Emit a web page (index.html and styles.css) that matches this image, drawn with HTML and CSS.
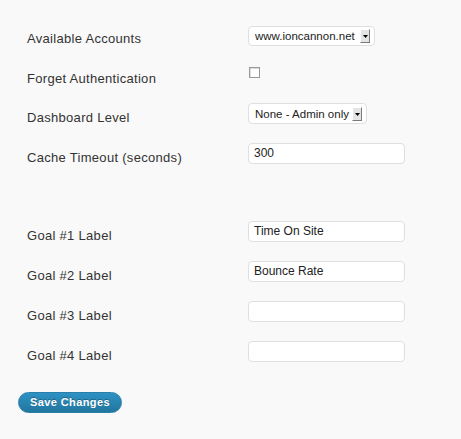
FILE: index.html
```html
<!DOCTYPE html>
<html>
<head>
<meta charset="utf-8">
<link rel="stylesheet" href="styles.css">
</head>
<body>
<form class="settings">
  <div class="row row-first">
    <div class="label">Available Accounts</div>
    <div class="control ctl-sel1">
      <div class="select select-accounts"><span class="select-value">www.ioncannon.net</span><span class="select-arrow"><svg width="5" height="3" viewBox="0 0 5 3"><path d="M0 0H5L2.5 3Z" fill="#000"/></svg></span></div>
    </div>
  </div>
  <div class="row row-check">
    <div class="label">Forget Authentication</div>
    <div class="control ctl-check"><span class="checkbox"></span></div>
  </div>
  <div class="row">
    <div class="label">Dashboard Level</div>
    <div class="control">
      <div class="select select-level"><span class="select-value">None - Admin only</span><span class="select-arrow"><svg width="5" height="3" viewBox="0 0 5 3"><path d="M0 0H5L2.5 3Z" fill="#000"/></svg></span></div>
    </div>
  </div>
  <div class="row">
    <div class="label">Cache Timeout (seconds)</div>
    <div class="control"><div class="input">300</div></div>
  </div>
  <div class="spacer"></div>
  <div class="row row-goal">
    <div class="label">Goal #1 Label</div>
    <div class="control"><div class="input">Time On Site</div></div>
  </div>
  <div class="row row-goal">
    <div class="label">Goal #2 Label</div>
    <div class="control"><div class="input">Bounce Rate</div></div>
  </div>
  <div class="row row-goal">
    <div class="label">Goal #3 Label</div>
    <div class="control"><div class="input"></div></div>
  </div>
  <div class="row row-goal">
    <div class="label">Goal #4 Label</div>
    <div class="control"><div class="input"></div></div>
  </div>
  <div class="submit"><span class="button-primary">Save Changes</span></div>
</form>
</body>
</html>
```
FILE: styles.css
```css
html, body {
  margin: 0;
  padding: 0;
  background: #f9f9f9;
}
body {
  width: 461px;
  height: 439px;
  overflow: hidden;
  font-family: "Liberation Sans", Arial, sans-serif;
  color: #333;
}
.settings {
  padding-top: 18px;
}
.row {
  display: grid;
  grid-template-columns: 248px 1fr;
  height: 40px;
}
.row-check {
  height: 39px;
}
.label {
  padding-left: 27px;
  padding-top: 11px;
  font-size: 13px;
  line-height: 20px;
  letter-spacing: 0.3px;
  color: #333;
}
.control {
  padding-top: 6px;
}
.ctl-sel1 {
  padding-top: 8px;
}
.ctl-check {
  padding-top: 9px;
  padding-left: 1px;
}
.select {
  box-sizing: border-box;
  display: flex;
  align-items: center;
  height: 21px;
  background: #fff;
  border: 1px solid #dfdfdf;
  border-radius: 4px;
  padding: 0 4px 0 6px;
  font-size: 11.5px;
  color: #222;
}
.select-accounts {
  width: 127px;
  height: 20px;
}
.select-level {
  width: 119px;
}
.select-value {
  flex: 1;
  white-space: nowrap;
  overflow: hidden;
}
.select-arrow {
  box-sizing: border-box;
  width: 10px;
  height: 14px;
  display: flex;
  align-items: center;
  justify-content: center;
  background: #e4e4e4;
  border-top: 1px solid #fff;
  border-left: 1px solid #fff;
  border-right: 1px solid #7a7a7a;
  border-bottom: 1px solid #7a7a7a;
}
.select-arrow svg {
  display: block;
  margin-top: 1px;
}
.checkbox {
  display: block;
  box-sizing: border-box;
  width: 11px;
  height: 11px;
  border: 1px solid #9d9799;
  background: #fff;
  box-shadow: inset 1px 1px 0 #dcdcdc;
}
.input {
  box-sizing: border-box;
  width: 157px;
  height: 21px;
  background: #fff;
  border: 1px solid #dfdfdf;
  border-radius: 4px;
  padding: 0 5px;
  font-size: 12px;
  line-height: 19px;
  color: #222;
}
.spacer {
  height: 38px;
}
.row-goal .label {
  padding-top: 11px;
}
.submit {
  padding: 17px 0 0 18px;
}
.button-primary {
  display: inline-block;
  box-sizing: border-box;
  width: 104px;
  height: 21px;
  border-radius: 11px;
  border: 1px solid #2a7fa8;
  background: linear-gradient(#2e92c4, #21769e);
  color: #fff;
  font-weight: bold;
  font-size: 11px;
  letter-spacing: 0.4px;
  line-height: 19px;
  text-align: center;
  text-shadow: 0 -1px 0 rgba(0,0,0,0.3);
}
```
